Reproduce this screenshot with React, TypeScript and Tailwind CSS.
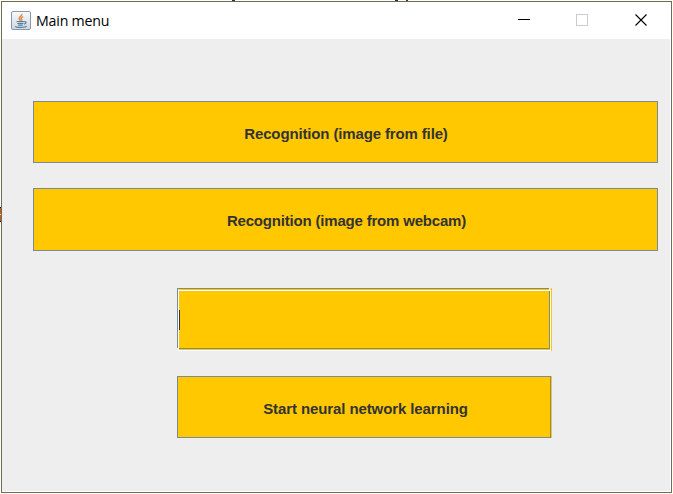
import React from "react";

function JavaIcon() {
  return (
    <svg width="20" height="19" viewBox="0 0 20 19" className="-mt-px block shrink-0">
      <defs>
        <linearGradient id="tile" x1="0" y1="0" x2="0" y2="1">
          <stop offset="0" stopColor="#fafbfc" />
          <stop offset="1" stopColor="#cbd6df" />
        </linearGradient>
      </defs>
      <rect x="0.5" y="0.5" width="19" height="18" rx="1.5" fill="url(#tile)" stroke="#8799aa" />
      <path d="M10.8 3c.6 2-3.3 2.8-2.6 4.8.2.7 1 1.2 1.2 2M12.2 5.6c-2 .8-2.6 1.6-1.7 2.6.4.5.2 1-.2 1.5" fill="none" stroke="#e78b4c" strokeWidth="1.5" />
      <path d="M5.6 10.5h7.6M6.4 12.4h6M7 14.2h4.8M13.4 10.6c2.4-.5 2.2 2-.5 2.5M4.2 15.3c1.4 1.5 9.7 1.5 11.4-.2" fill="none" stroke="#587f9d" strokeWidth="1.2" />
    </svg>
  );
}

function MenuButton({ children, className }: { children: React.ReactNode; className: string }) {
  return (
    <button
      className={`flex items-center justify-center border border-[#7a8a99] bg-[#ffc800] text-[15px] font-bold whitespace-nowrap text-[#333333] ${className}`}
    >
      {children}
    </button>
  );
}

function TextField() {
  return (
    <div className="mt-[37px] ml-[175px] flex h-[63px] w-[375px]">
      <div className="h-[60px] w-px bg-[#7a8a99]" />
      <div className="w-px border-t border-[#7a8a99] bg-white" />
      <div className="flex w-[370px] flex-col">
        <div className="h-px bg-[#7a8a99]" />
        <div className="h-px bg-[#ffc800]" />
        <div className="h-px bg-white" />
        <div className="flex h-[57px] items-center bg-[#ffc800]">
          <div className="h-5 w-px bg-[#333333]" />
        </div>
        <div className="h-px bg-[#7a8a99]" />
        <div className="h-px bg-[#ffc800]" />
        <div className="h-px bg-white" />
      </div>
      <div className="flex w-px flex-col">
        <div className="h-px bg-[#eeeeee]" />
        <div className="h-px bg-white" />
        <div className="h-px bg-white" />
        <div className="h-[58px] bg-[#7a8a99]" />
        <div className="h-px bg-[#ffc800]" />
        <div className="h-px bg-white" />
      </div>
      <div className="flex w-px flex-col">
        <div className="h-px bg-[#eeeeee]" />
        <div className="h-px bg-[#ffc800]" />
        <div className="h-[61px] bg-white" />
      </div>
      <div className="w-px bg-[#ffc800]" />
    </div>
  );
}

export default function App() {
  return (
    <div className="relative h-[494px] w-[673px] overflow-hidden bg-[#fffee8] pt-px pl-px font-['Liberation_Sans',Arial,sans-serif]">
      <div className="absolute top-0 left-[232px] h-px w-[3px] bg-[#342b38]" />
      <div className="absolute top-0 left-[395px] h-px w-[3px] bg-[#342b38]" />
      <div className="absolute top-0 left-[406px] h-px w-[2px] bg-[#542b18]" />
      <div className="h-[492px] w-[671px] border border-[#6b6b63] bg-white">
        <header className="flex h-[37px] items-center pl-[9px]">
          <JavaIcon />
          <span className="ml-[5px] w-[100px] font-['Open_Sans','Noto_Sans',sans-serif] text-[14.2px] leading-5 tracking-[-0.2px] text-black">
            Main menu
          </span>
          <svg className="-mt-px ml-[382px] block shrink-0" width="132" height="14" viewBox="0 0 132 14" fill="none">
            <path d="M0 6.5h12" stroke="#000" shapeRendering="crispEdges" />
            <rect x="58.5" y="1.5" width="11" height="11" stroke="#cccccc" shapeRendering="crispEdges" />
            <path d="M117.5 1.5l11 11m0-11l-11 11" stroke="#000" strokeWidth="1.1" />
          </svg>
        </header>
        <main className="flex h-[452px] w-[668px] flex-col bg-[#eeeeee] pt-[62px]">
          <MenuButton className="ml-[31px] h-[62px] w-[625px] pt-[5px] pl-px tracking-[-0.14px]">
            Recognition (image from file)
          </MenuButton>
          <MenuButton className="mt-[25px] ml-[31px] h-[63px] w-[625px] pt-[3px] pl-[2px] tracking-[-0.19px]">
            Recognition (image from webcam)
          </MenuButton>
          <TextField />
          <div className="mt-[25px] ml-[175px] h-[62px] w-[375px] bg-[#ffc800]">
            <MenuButton className="h-[62px] w-[374px] pt-[5px] pl-[3px] tracking-[-0.1px]">
              Start neural network learning
            </MenuButton>
          </div>
        </main>
      </div>
      <div className="absolute top-[207px] left-0 h-[15px] w-px border-y border-[#17152a] bg-[#c85c0a]" />
      <div className="absolute top-[214px] left-0 h-px w-px bg-[#f5e6d2]" />
    </div>
  );
}
